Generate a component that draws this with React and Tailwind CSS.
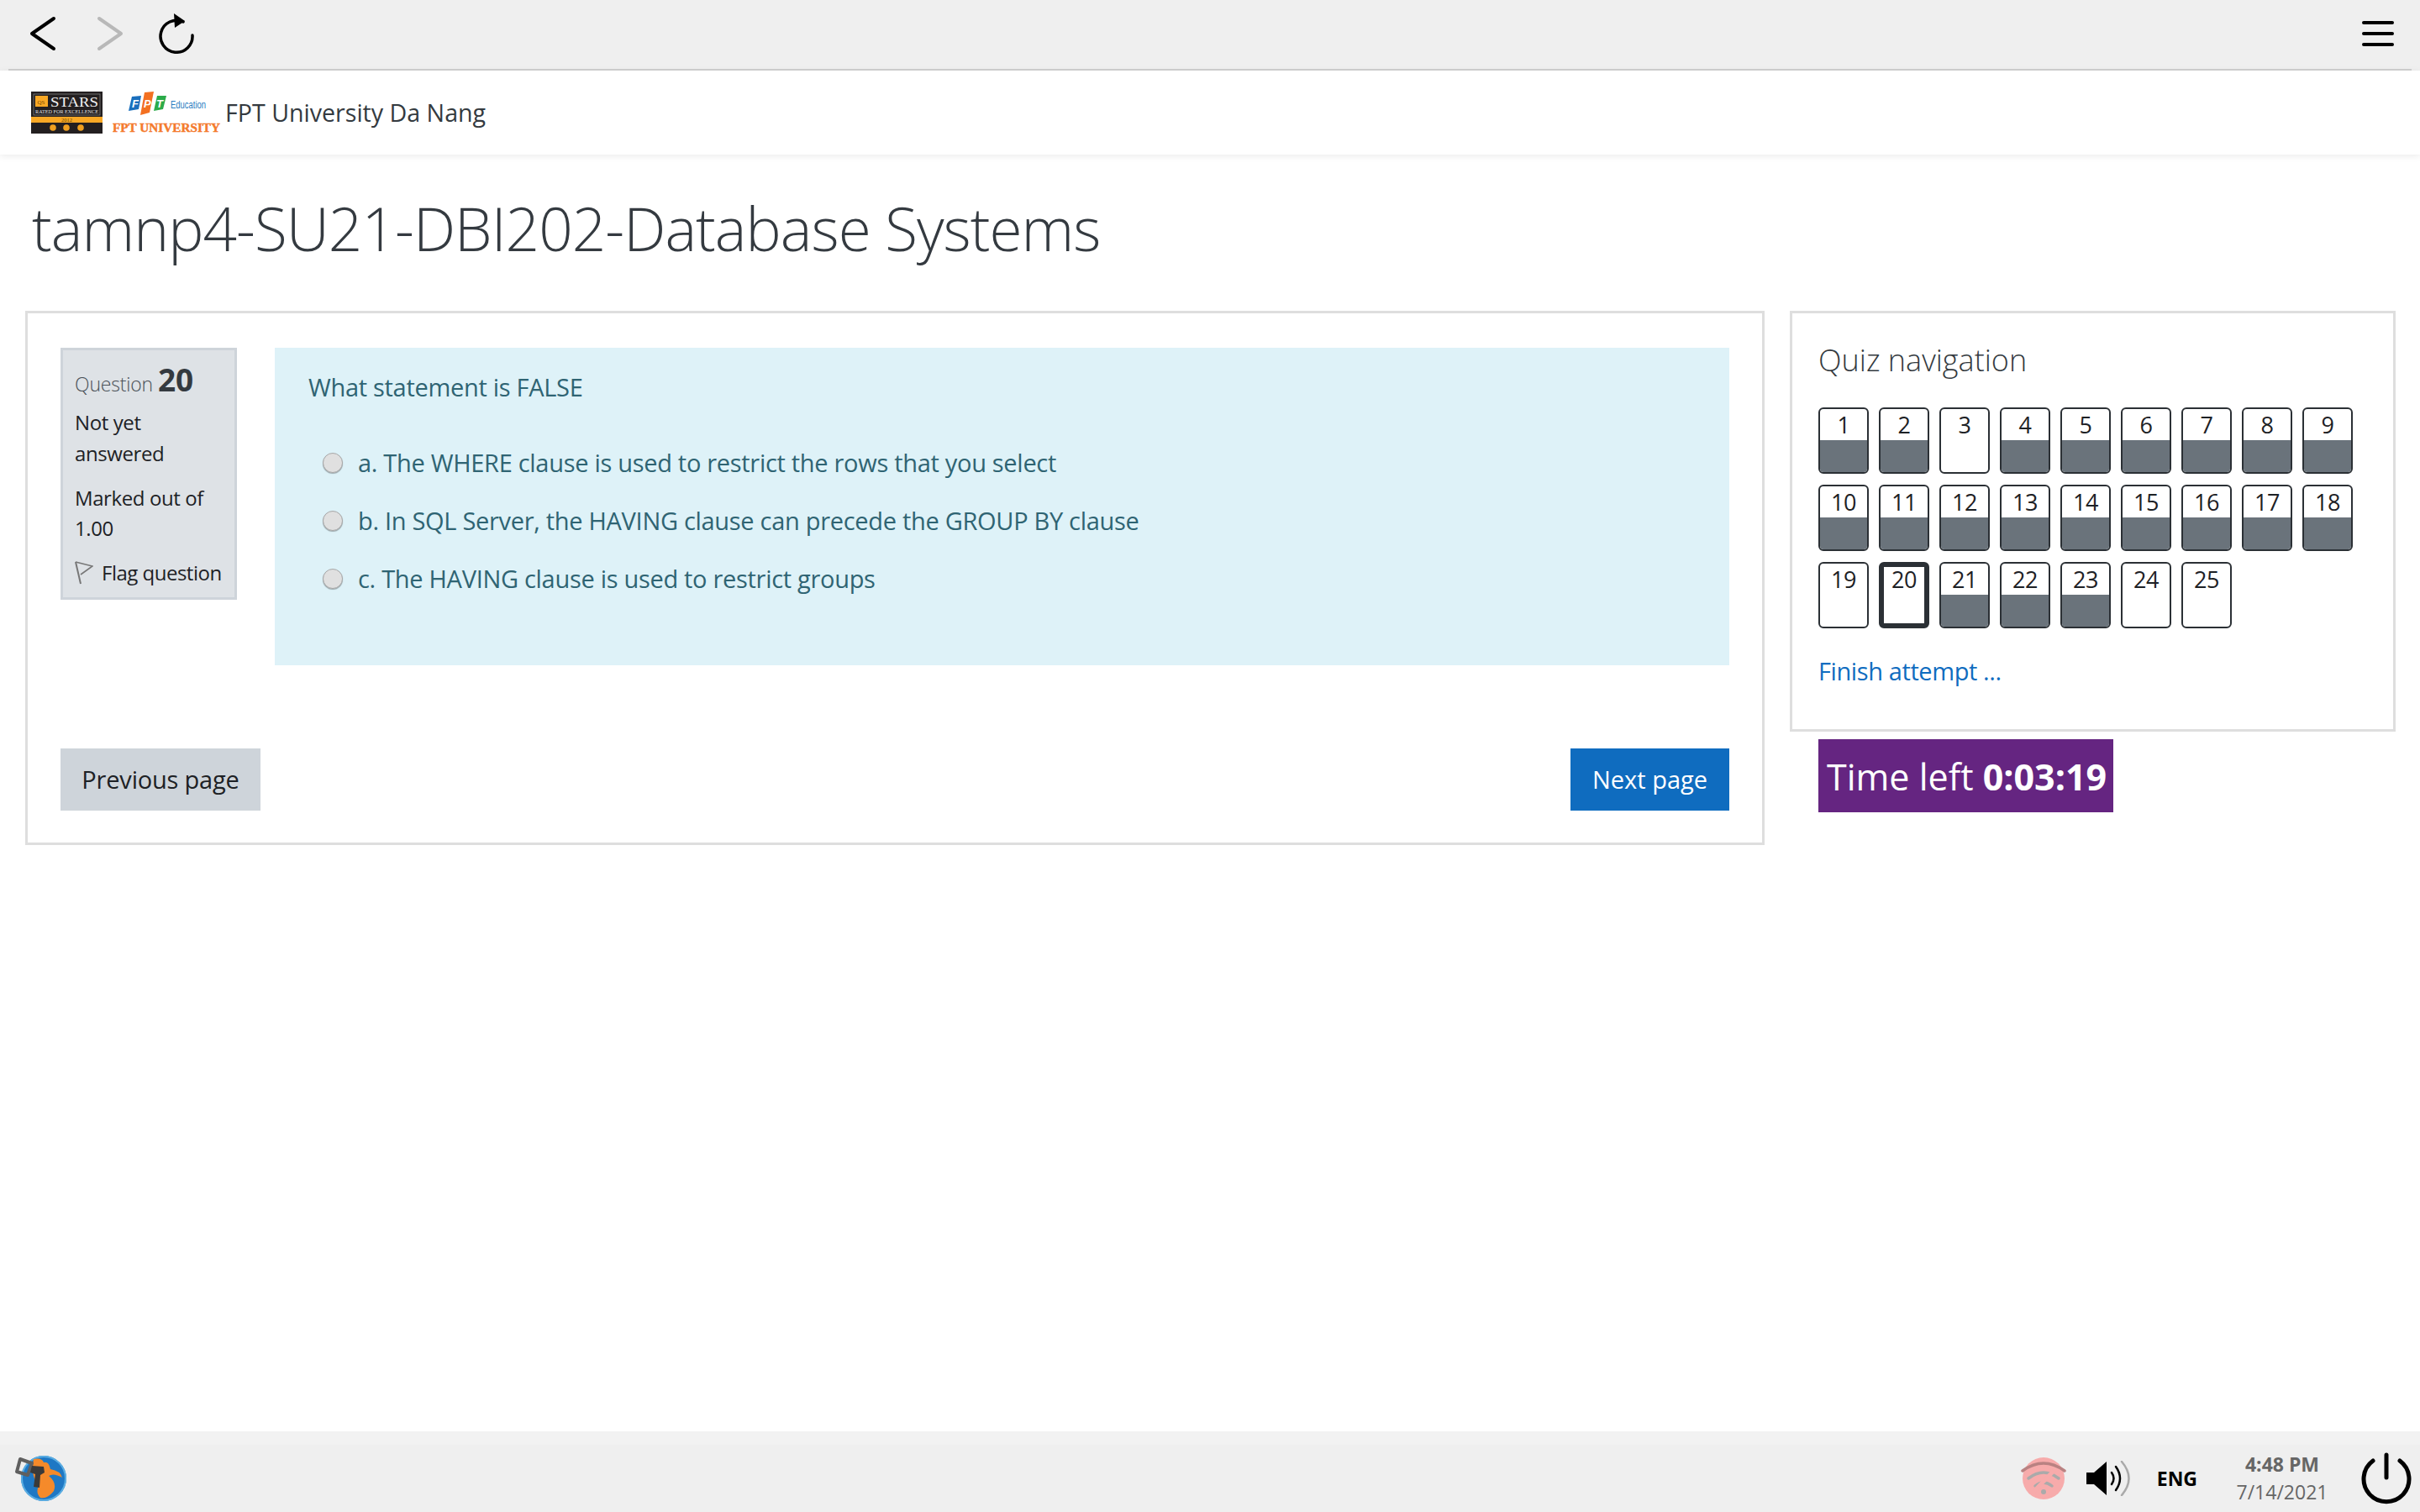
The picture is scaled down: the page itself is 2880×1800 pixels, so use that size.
import React from 'react';

const answered = [1, 2, 4, 5, 6, 7, 8, 9, 10, 11, 12, 13, 14, 15, 16, 17, 18, 21, 22, 23];
const numbers = Array.from({ length: 25 }, (_, i) => i + 1);

const options = [
  'a. The WHERE clause is used to restrict the rows that you select',
  'b. In SQL Server, the HAVING clause can precede the GROUP BY clause',
  'c. The HAVING clause is used to restrict groups',
];

const QuizButton = ({ n }) => {
  const current = n === 20;
  return (
    <div className={`relative h-[79px] w-[60px] overflow-hidden rounded-[6px] bg-white border-[#2b3035] ${current ? 'border-[6px]' : 'border-[2px]'}`}>
      {answered.includes(n) && <div className="absolute inset-x-0 bottom-0 h-[38px] bg-[#6a737b]"></div>}
      <div className={`text-center text-[27px] leading-[36px] tracking-[-0.5px] text-[#1d2125] ${current ? 'mt-[-3px]' : 'mt-[1px]'}`}>{n}</div>
    </div>
  );
};

const Radio = () => (
  <span className="h-[24px] w-[24px] shrink-0 rounded-full border border-[#a8a8a8] bg-[#e0e0e0] shadow-[0_1px_1px_rgba(0,0,0,0.3)]"></span>
);

const QsLogo = () => (
  <svg width="85" height="50" viewBox="0 0 85 50" className="shrink-0">
    <rect x="0" y="0" width="85" height="50" fill="#231f20" />
    <rect x="0" y="30" width="85" height="7" fill="#f9a825" />
    <rect x="3" y="3" width="79" height="25" fill="none" stroke="#8a8a8a" strokeWidth="0.7" />
    <rect x="5" y="5" width="15" height="13" fill="#f9a825" />
    <text x="7.5" y="15" fontSize="7" fill="#7a4a00" fontFamily="Liberation Serif, serif">QS</text>
    <text x="23" y="18" fontSize="17" fill="#f2f2f2" fontFamily="Liberation Serif, serif" textLength="57" lengthAdjust="spacingAndGlyphs">STARS</text>
    <text x="5" y="26" fontSize="5.5" fill="#e0e0e0" fontFamily="Liberation Serif, serif" textLength="75" lengthAdjust="spacingAndGlyphs">RATED FOR EXCELLENCE</text>
    <text x="42.5" y="36" fontSize="6.5" fill="#6b4a00" textAnchor="middle" fontFamily="Liberation Serif, serif">2012</text>
    <circle cx="26" cy="43" r="3.8" fill="#f0a020" />
    <circle cx="42" cy="43" r="3.8" fill="#f0a020" />
    <circle cx="59" cy="43" r="3.8" fill="#f0a020" />
  </svg>
);

const FptLogo = () => (
  <svg width="130" height="54" viewBox="0 0 130 54" className="shrink-0">
    <path d="M23 8 L34 7 L31 23 L19 25 Z" fill="#1a6fbd" />
    <path d="M38 3 L49 2 L44 27 L33 30 Z" fill="#f37021" />
    <path d="M53 7 L64 7 L60 23 L49 25 Z" fill="#2bab4a" />
    <text x="23" y="21" fontSize="13" fontWeight="700" fontStyle="italic" fill="#fff" fontFamily="Liberation Sans, sans-serif">F</text>
    <text x="37" y="21" fontSize="13" fontWeight="700" fontStyle="italic" fill="#fff" fontFamily="Liberation Sans, sans-serif">P</text>
    <text x="52" y="21" fontSize="13" fontWeight="700" fontStyle="italic" fill="#fff" fontFamily="Liberation Sans, sans-serif">T</text>
    <text x="69" y="22" fontSize="12" fill="#2a7cc0" fontFamily="Liberation Sans, sans-serif" textLength="42" lengthAdjust="spacingAndGlyphs">Education</text>
    <text x="0" y="50" fontSize="14" fontWeight="700" fill="#f47a2c" stroke="#f47a2c" strokeWidth="0.4" fontFamily="Liberation Serif, serif" textLength="128" lengthAdjust="spacingAndGlyphs">FPT UNIVERSITY</text>
  </svg>
);

const StartIcon = () => (
  <svg width="66" height="62" viewBox="0 0 66 62">
    <circle cx="38" cy="31" r="27" fill="#1f78c4" />
    <circle cx="38" cy="31" r="26" fill="none" stroke="#5aaee3" strokeWidth="2" />
    <path d="M26 8 Q36 6 38 12 Q44 10 46 20 Q58 22 60 30 Q50 24 44 28 Q54 36 50 46 Q42 56 34 54 Q28 48 32 40 Q22 28 26 8 Z" fill="#f58a2a" />
    <path d="M10 8 L24 13 L19 27 L6 23 Z" fill="none" stroke="#5f5f5f" strokeWidth="4" strokeLinejoin="round" />
    <path d="M24 16 L38 17 L39 24 L34 27 L33 42 L26 41 L28 26 L22 24 Z" fill="#3a3a3a" />
  </svg>
);

const WifiOff = () => (
  <svg width="54" height="54" viewBox="0 0 54 54">
    <circle cx="27" cy="27" r="25" fill="#f7abab" />
    <path d="M2 18 Q27 0 52 18" fill="none" stroke="#b98282" strokeWidth="3.5" strokeLinecap="round" />
    <path d="M9 27 Q27 13 45 27" fill="none" stroke="#aaa" strokeWidth="3.5" strokeLinecap="round" />
    <path d="M17 36 Q27 28 37 36" fill="none" stroke="#aaa" strokeWidth="3.5" strokeLinecap="round" />
    <circle cx="27" cy="43" r="3" fill="#aaa" />
    <path d="M15 43 L41 16" stroke="#f7abab" strokeWidth="5" />
  </svg>
);

const Speaker = () => (
  <svg width="54" height="42" viewBox="0 0 54 42">
    <path d="M1 14 H10 L25 1 V41 L10 28 H1 Z" fill="#000" />
    <path d="M31 14 Q36 21 31 28" fill="none" stroke="#000" strokeWidth="2.5" strokeLinecap="round" />
    <path d="M36 7 Q46 21 36 35" fill="none" stroke="#000" strokeWidth="2.5" strokeLinecap="round" />
    <path d="M43 1 Q60 21 43 41" fill="none" stroke="#aaa" strokeWidth="2.5" strokeLinecap="round" />
  </svg>
);

const Power = () => (
  <svg width="62" height="62" viewBox="0 0 62 62" fill="none" stroke="#000" strokeWidth="5" strokeLinecap="round">
    <path d="M30 3 V30" />
    <path d="M14 10 A27 27 0 1 0 46 10" />
  </svg>
);

const App = () => {
  return (
    <div className="flex h-[1800px] w-full flex-col overflow-hidden bg-white font-['Open_Sans',sans-serif] text-[#1d2125]">
      {/* Browser toolbar */}
      <div className="flex h-[84px] shrink-0 items-start bg-[#efefef]">
        <div className="ml-[10px] mr-[10px] flex h-[84px] w-full items-center border-b-2 border-[#d0d0d0] pb-[2px]">
          <svg width="34" height="42" viewBox="0 0 34 42" className="ml-[25px]" fill="none" stroke="#000" strokeWidth="4" strokeLinecap="round" strokeLinejoin="round">
            <path d="M29 3 L3 21 L29 39" />
          </svg>
          <svg width="34" height="42" viewBox="0 0 34 42" className="ml-[44px]" fill="none" stroke="#b8b8b8" strokeWidth="4" strokeLinecap="round" strokeLinejoin="round">
            <path d="M5 3 L31 21 L5 39" />
          </svg>
          <svg width="44" height="48" viewBox="0 0 44 48" className="ml-[41px]">
            <path d="M30 10 A19 19 0 1 0 41 26" fill="none" stroke="#000" strokeWidth="3.5" strokeLinecap="round" />
            <path d="M19 0 L32 9 L20 17 Z" fill="#000" />
          </svg>
          <div className="ml-auto mr-[21px] flex w-[38px] flex-col gap-[9px]">
            <div className="h-[4px] rounded-full bg-black"></div>
            <div className="h-[4px] rounded-full bg-black"></div>
            <div className="h-[4px] rounded-full bg-black"></div>
          </div>
        </div>
      </div>

      {/* Site header */}
      <div className="flex h-[100px] shrink-0 items-center bg-white pl-[37px] shadow-[0_2px_8px_rgba(0,0,0,0.08)]">
        <QsLogo />
        <div className="ml-[12px]"><FptLogo /></div>
        <span className="ml-[4px] text-[28.6px] text-[#343a40]">FPT University Da Nang</span>
      </div>

      <main className="flex-1">
        <h1 className="ml-[38px] mt-[41px] h-[145px] text-[71px] leading-[94px] tracking-[-0.95px] font-light text-[#343a40]">tamnp4-SU21-DBI202-Database Systems</h1>

        <div className="flex items-start">
          {/* Question card */}
          <div className="ml-[30px] h-[636px] w-[2070px] border-[3px] border-[#dedede] px-[39px] pt-[41px]">
            <div className="flex items-start">
              <div className="h-[300px] w-[210px] shrink-0 border-[3px] border-[#ced4da] bg-[#dee2e6] pl-[14px] pt-[7px]">
                <div className="flex h-[46px] items-baseline text-[#495057]">
                  <span className="text-[23px] tracking-[-0.2px] font-light">Question</span>
                  <span className="ml-[6px] text-[37px] font-bold text-[#343a40]">20</span>
                </div>
                <div className="mt-[14px] text-[24px] leading-[37px] tracking-[-0.4px]">Not yet answered</div>
                <div className="mt-[17px] text-[24px] leading-[36px] tracking-[-0.4px]">Marked out of 1.00</div>
                <div className="mt-[17px] flex items-center text-[24px] leading-[36px] tracking-[-0.5px]">
                  <svg width="22" height="28" viewBox="0 0 22 28" fill="none" stroke="#777" strokeWidth="1.6">
                    <path d="M1 1 L21 6 L7 16" />
                    <path d="M1 1 L7 27" strokeWidth="2" />
                  </svg>
                  <span className="ml-[10px]">Flag question</span>
                </div>
              </div>

              <div className="ml-[45px] h-[378px] flex-1 bg-[#def2f8] pl-[40px] pt-[27px] text-[#2f6473]">
                <div className="text-[29px] leading-[40px] tracking-[-0.3px]">What statement is FALSE</div>
                <div className="mt-[50px] flex flex-col gap-[29px] pl-[17px]">
                  {options.map(o => (
                    <div key={o} className="flex h-[40px] items-center gap-[18px] text-[29px] leading-[40px] tracking-[-0.3px]">
                      <Radio />
                      <span>{o}</span>
                    </div>
                  ))}
                </div>
              </div>
            </div>

            <div className="mt-[99px] flex justify-between">
              <button className="h-[74px] w-[238px] bg-[#ced4da] text-[29px] tracking-[-0.2px] text-[#1d2125]">Previous page</button>
              <button className="h-[74px] w-[189px] bg-[#0f6cbf] text-[29px] text-white">Next page</button>
            </div>
          </div>

          {/* Quiz navigation */}
          <div className="ml-[30px] w-[721px]">
            <div className="h-[501px] border-[3px] border-[#dedede] pl-[31px] pt-[31px]">
              <h2 className="text-[36px] leading-[50px] font-light text-[#343a40]">Quiz navigation</h2>
              <div className="mt-[31px] grid w-[660px] grid-cols-[repeat(9,60px)] gap-x-[12px] gap-y-[13px]">
                {numbers.map(n => <QuizButton key={n} n={n} />)}
              </div>
              <a className="mt-[31px] block text-[29px] leading-[40px] tracking-[-0.4px] text-[#0f6cbf]">Finish attempt ...</a>
            </div>
            <div className="ml-[34px] mt-[9px] flex h-[87px] w-[351px] items-center whitespace-nowrap bg-[#652581] pl-[10px] pt-[3px] text-[43px] text-white">
              Time left&nbsp;<b>0:03:19</b>
            </div>
          </div>
        </div>
      </main>

      {/* Taskbar */}
      <div className="flex h-[96px] shrink-0 items-center border-t-[16px] border-[#f2f2f2] bg-[#efefef] pl-[14px] pr-[8px]">
        <StartIcon />
        <div className="ml-auto flex items-center">
          <WifiOff />
          <div className="ml-[23px]"><Speaker /></div>
          <span className="ml-[31px] text-[23px] font-bold text-black">ENG</span>
          <div className="ml-[46px] flex w-[110px] flex-col items-center text-[23px] leading-[33px] text-[#666]">
            <span className="font-bold">4:48 PM</span>
            <span>7/14/2021</span>
          </div>
          <div className="ml-[39px]"><Power /></div>
        </div>
      </div>
    </div>
  );
};

export default App;
